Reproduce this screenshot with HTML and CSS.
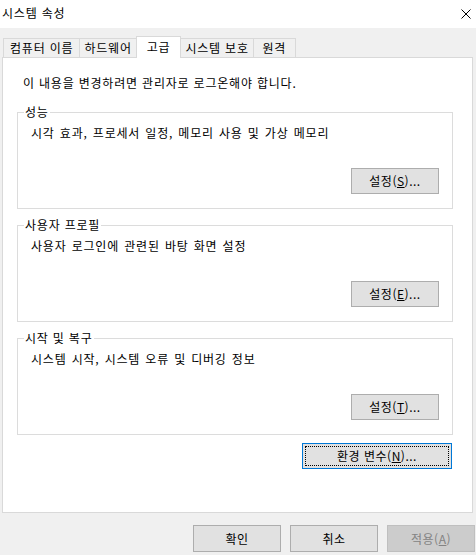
FILE: index.html
```html
<!DOCTYPE html>
<html lang="ko">
<head>
<meta charset="utf-8">
<link rel="stylesheet" href="styles.css">
</head>
<body>
<div class="window">
  <div class="titlebar">
    <span class="title">시스템 속성</span>
    <svg class="close" width="12" height="12" viewBox="0 0 12 12"><path d="M1.5 1.5 L10.5 10.5 M10.5 1.5 L1.5 10.5" stroke="#000" stroke-width="1" fill="none"/></svg>
  </div>
  <div class="body">
    <div class="tabs">
      <div class="tab wide">컴퓨터 이름</div>
      <div class="tab">하드웨어</div>
      <div class="tab active">고급</div>
      <div class="tab">시스템 보호</div>
      <div class="tab">원격</div>
    </div>
    <div class="panel">
      <div class="intro">이 내용을 변경하려면 관리자로 로그온해야 합니다.</div>
      <fieldset class="group">
        <legend>성능</legend>
        <div class="desc">시각 효과, 프로세서 일정, 메모리 사용 및 가상 메모리</div>
        <div class="btnrow"><button class="btn">설정(<u>S</u>)...</button></div>
      </fieldset>
      <fieldset class="group">
        <legend>사용자 프로필</legend>
        <div class="desc">사용자 로그인에 관련된 바탕 화면 설정</div>
        <div class="btnrow"><button class="btn">설정(<u>E</u>)...</button></div>
      </fieldset>
      <fieldset class="group">
        <legend>시작 및 복구</legend>
        <div class="desc">시스템 시작, 시스템 오류 및 디버깅 정보</div>
        <div class="btnrow"><button class="btn">설정(<u>T</u>)...</button></div>
      </fieldset>
      <div class="envrow"><button class="btn env"><span class="focus">환경 변수(<u>N</u>)...</span></button></div>
    </div>
    <div class="footer">
      <button class="btn dlg">확인</button>
      <button class="btn dlg">취소</button>
      <button class="btn dlg disabled">적용(<u>A</u>)</button>
    </div>
  </div>
</div>
</body>
</html>
```
FILE: styles.css
```css
* { box-sizing: border-box; }
html, body { margin: 0; padding: 0; }
body {
  font-family: "Noto Sans CJK KR", "Noto Sans", sans-serif;
  font-size: 12px;
  letter-spacing: 0.8px;
  color: #000;
  background: #f0f0f0;
}
.window {
  width: 476px;
  height: 555px;
  background: #f0f0f0;
  overflow: hidden;
}
.titlebar {
  height: 28px;
  background: #fff;
  display: flex;
  align-items: center;
  justify-content: space-between;
  padding: 0 4px 3px 2px;
}
.title { font-size: 12px; line-height: 16px; }
.close { margin-top: 2px; }
.body { padding-top: 8px; }
.tabs {
  display: flex;
  align-items: flex-end;
  padding-left: 3px;
  height: 21px;
  position: relative;
  z-index: 1;
}
.tab {
  height: 19px;
  line-height: 17px;
  padding: 0 4px;
  min-width: 43px;
  text-align: center;
  border: 1px solid #d9d9d9;
  border-bottom: none;
  border-right: none;
  background: #f0f0f0;
  white-space: nowrap;
}
.tab.wide { padding: 0 6px; }
.tab:nth-child(4) { border-left: none; }
.tab:last-child { border-right: 1px solid #d9d9d9; }
.tab.active {
  height: 22px;
  line-height: 19px;
  background: #fff;
  border-right: 1px solid #d9d9d9;
  margin-bottom: -1px;
  padding: 0 10px;
}
.panel {
  margin: 0 3px 0 2px;
  height: 456px;
  background: #fff;
  border: 1px solid #d9d9d9;
  padding: 17px 19px 0 14px;
}
.intro {
  line-height: 16px;
  padding-left: 6px;
  margin-bottom: 13px;
}
.group {
  margin: 0 0 8px 0;
  padding: 4px 13px 13px 13px;
  border: 1px solid #dcdcdc;
  height: 105px;
  min-width: 0;
}
.group legend {
  padding: 0 1px;
  margin-left: -7px;
  line-height: 16px;
}
.desc { line-height: 16px; padding-top: 1px; word-spacing: 1px; }
.btnrow {
  display: flex;
  justify-content: flex-end;
  margin-top: 27px;
}
.btn {
  font-family: inherit;
  font-size: 12px;
  letter-spacing: 0.5px;
  color: #000;
  background: #e1e1e1;
  border: 1px solid #adadad;
  width: 88px;
  height: 26px;
  padding: 0;
  line-height: 16px;
}
.btn u { text-decoration: underline; }
.envrow {
  display: flex;
  justify-content: flex-end;
  margin-top: 7px;
  padding-right: 1px;
}
.btn.env {
  width: 150px;
  border-color: #0078d7;
  padding: 2px;
}
.btn.env .focus {
  display: flex;
  align-items: center;
  justify-content: center;
  height: 100%;
  border: 1px dotted #000;
}
.footer {
  display: flex;
  justify-content: flex-end;
  gap: 9px;
  padding: 12px 1px 0 0;
}
.btn.dlg { width: 88px; height: 27px; }
.btn.disabled {
  background: #cccccc;
  border-color: #bfbfbf;
  color: #838383;
}
```
